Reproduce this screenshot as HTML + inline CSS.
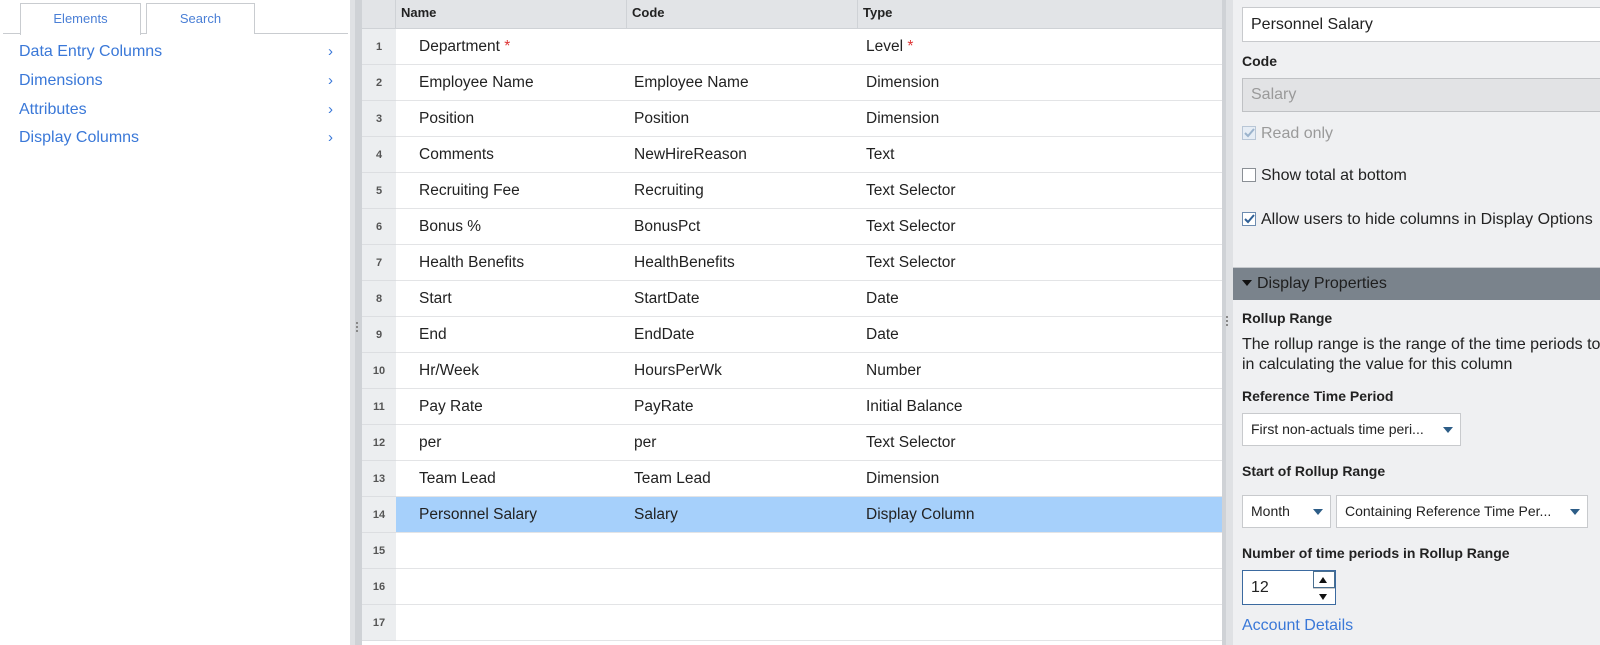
<!DOCTYPE html>
<html><head><meta charset="utf-8"><style>
*{box-sizing:border-box;margin:0;padding:0}
body{width:1600px;height:645px;overflow:hidden;font-family:"Liberation Sans",Arial,sans-serif;background:#fff;position:relative;color:#222}
.abs{position:absolute}
#left{left:0;top:0;width:350px;height:645px;background:#fff}
.tab{position:absolute;top:3px;height:31px;border:1px solid #c9ccd0;border-bottom:none;background:#fff;color:#4a7fd6;font-size:13px;text-align:center;line-height:29px}
.item{position:absolute;left:19px;font-size:16px;color:#3a78d8}
.chev{position:absolute;left:328px;font-size:15px;color:#3a78d8}
#spl1{left:350px;top:0;width:12px;height:645px;background:linear-gradient(90deg,#dfe1e4 0,#dfe1e4 5px,#cfd2d6 5px,#cfd2d6 12px)}
#grid{left:362px;top:0;width:860px;height:645px;background:#fff}
.hdr{position:absolute;top:0;height:29px;background:#e2e4e7;border-bottom:1px solid #cfd2d6;font-size:13px;font-weight:bold;line-height:26px;color:#222}
.rn{position:absolute;left:0;width:34px;background:#eceef0;font-size:11px;font-weight:bold;color:#555;text-align:center;border-bottom:1px solid #dcdee1}
.row{position:absolute;left:34px;width:826px;border-bottom:1px solid #e3e4e6;font-size:15.5px;color:#222}
.row span{position:absolute;top:9px}
#spl2{left:1222px;top:0;width:11px;height:645px;background:linear-gradient(90deg,#cfd2d6 0,#cfd2d6 4px,#dfe1e4 4px)}
#right{left:1233px;top:0;width:367px;height:645px;background:#eff0f2}
.lbl{position:absolute;left:9px;font-size:14px;font-weight:bold;color:#222}
.txt{position:absolute;left:9px;font-size:16px;color:#222;white-space:nowrap}
.inp{position:absolute;background:#fff;border:1px solid #c8cacd;font-size:16px;padding-left:8px;white-space:nowrap;overflow:hidden}
.cb{display:inline-block;width:14px;height:14px;border:1px solid #8a8f95;background:#fff;vertical-align:-2px;margin-right:5px;position:relative}
.tri{position:absolute;width:0;height:0;border-left:5px solid transparent;border-right:5px solid transparent;border-top:6px solid #2d5d87}
.dots{position:absolute;width:2px;height:2px;background:#888;box-shadow:0 4px #888,0 8px #888}
</style></head><body>
<div id="left" class="abs">
  <div class="abs" style="left:3px;top:33px;width:345px;height:1px;background:#c9ccd0"></div>
  <div class="tab" style="left:20px;width:121px;height:32px">Elements</div>
  <div class="tab" style="left:146px;width:109px;background:#fff">Search</div>
  <div class="item" style="top:43px">Data Entry Columns</div><div class="chev" style="top:43px">›</div>
  <div class="item" style="top:72px">Dimensions</div><div class="chev" style="top:72px">›</div>
  <div class="item" style="top:101px">Attributes</div><div class="chev" style="top:101px">›</div>
  <div class="item" style="top:129px">Display Columns</div><div class="chev" style="top:129px">›</div>
</div>
<div id="spl1" class="abs"><div class="dots" style="left:6px;top:322px"></div></div>
<div id="grid" class="abs">
  <div class="hdr" style="left:0;width:34px;border-right:1px solid #cfd2d6"></div>
  <div class="hdr" style="left:34px;width:231px;border-right:1px solid #cfd2d6;padding-left:5px">Name</div>
  <div class="hdr" style="left:265px;width:231px;border-right:1px solid #cfd2d6;padding-left:5px">Code</div>
  <div class="hdr" style="left:496px;width:364px;padding-left:5px">Type</div>
  <div id="rows"></div>
</div>
<div id="spl2" class="abs"><div class="dots" style="left:4px;top:316px"></div></div>
<div id="right" class="abs">
  <div class="inp" style="left:9px;top:7px;width:370px;height:35px;line-height:33px">Personnel Salary</div>
  <div class="lbl" style="top:53px">Code</div>
  <div class="inp" style="left:9px;top:78px;width:370px;height:34px;line-height:32px;background:#e2e3e5;color:#9a9a9a;border-color:#bfc1c4">Salary</div>
  <div class="txt" style="top:125px;color:#9a9a9a"><span class="cb" style="border-color:#b8c6d6;background:#e6edf5"><svg width="12" height="12" style="position:absolute;left:0;top:0"><path d="M2 6 L5 9 L11 2" stroke="#9bb3cc" stroke-width="2" fill="none"/></svg></span>Read only</div>
  <div class="txt" style="top:167px"><span class="cb"></span>Show total at bottom</div>
  <div class="txt" style="top:211px"><span class="cb" style="border-color:#6d8cb0"><svg width="12" height="12" style="position:absolute;left:0;top:0"><path d="M2 6 L5 9 L11 2" stroke="#2f5f95" stroke-width="2" fill="none"/></svg></span>Allow users to hide columns in Display Options</div>
  <div class="abs" style="left:0;top:267px;width:367px;height:33px;background:#7a838c;border-top:1px solid #c6c9cd;font-size:16px;line-height:31px;color:#1e1e1e;padding-left:24px">Display Properties<div class="tri" style="left:9px;top:12px;border-top-color:#111"></div></div>
  <div class="lbl" style="top:310px">Rollup Range</div>
  <div class="txt" style="top:336px">The rollup range is the range of the time periods to</div>
  <div class="txt" style="top:356px">in calculating the value for this column</div>
  <div class="lbl" style="top:388px">Reference Time Period</div>
  <div class="inp" style="left:9px;top:413px;width:219px;height:33px;line-height:31px;font-size:14px">First non-actuals time peri...<div class="tri" style="left:200px;top:13px"></div></div>
  <div class="lbl" style="top:463px">Start of Rollup Range</div>
  <div class="inp" style="left:9px;top:495px;width:89px;height:33px;line-height:31px;font-size:14px">Month<div class="tri" style="left:70px;top:13px"></div></div>
  <div class="inp" style="left:103px;top:495px;width:252px;height:33px;line-height:31px;font-size:14px">Containing Reference Time Per...<div class="tri" style="left:233px;top:13px"></div></div>
  <div class="lbl" style="top:545px">Number of time periods in Rollup Range</div>
  <div class="inp" style="left:9px;top:570px;width:94px;height:35px;line-height:33px;border-color:#3b6aa0">12</div>
  <div class="abs" style="left:80px;top:571px;width:22px;height:17px;border:1px solid #4a6f8f;background:#fff"><div class="tri" style="left:5px;top:5px;border-top:none;border-bottom:6px solid #111;border-left-width:4px;border-right-width:4px"></div></div>
  <div class="abs" style="left:80px;top:588px;width:22px;height:16px;background:#fff;border-top:1px solid #ccc"><div class="tri" style="left:6px;top:5px;border-top-color:#111;border-left-width:4px;border-right-width:4px"></div></div>
  <div class="txt" style="top:617px;color:#3a78d8">Account Details</div>
</div>
<script>
var d=[["Department <span style='position:static;color:#d33'>*</span>","","Level <span style='position:static;color:#d33'>*</span>"],["Employee Name","Employee Name","Dimension"],["Position","Position","Dimension"],["Comments","NewHireReason","Text"],["Recruiting Fee","Recruiting","Text Selector"],["Bonus %","BonusPct","Text Selector"],["Health Benefits","HealthBenefits","Text Selector"],["Start","StartDate","Date"],["End","EndDate","Date"],["Hr/Week","HoursPerWk","Number"],["Pay Rate","PayRate","Initial Balance"],["per","per","Text Selector"],["Team Lead","Team Lead","Dimension"],["Personnel Salary","Salary","Display Column"],["","",""],["","",""],["","",""]];
var h="";
for(var i=0;i<17;i++){var t=29+36*i;
h+='<div class="rn" style="top:'+t+'px;height:36px;line-height:36px">'+(i+1)+'</div>';
h+='<div class="row" style="top:'+t+'px;height:36px;'+(i==13?'background:#a6d0fb;':'')+'"><span style="left:23px">'+d[i][0]+'</span><span style="left:238px">'+d[i][1]+'</span><span style="left:470px">'+d[i][2]+'</span></div>';}
document.getElementById('rows').innerHTML=h;
</script>
</body></html>
